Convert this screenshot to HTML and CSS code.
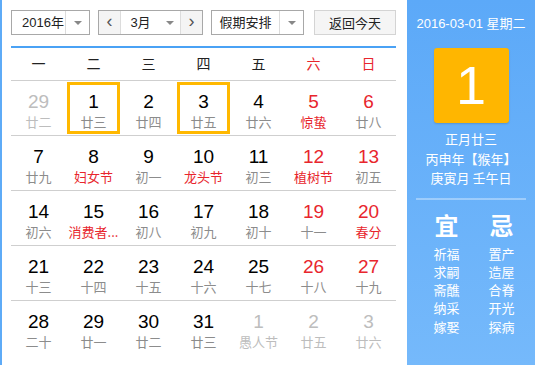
FILE: index.html
```html
<!DOCTYPE html>
<html lang="zh-CN">
<head>
    <meta charset="UTF-8">
    <title>万年历</title>
    <link rel="stylesheet" href="styles.css">
</head>
<body>
    <div class="cal">
        <div class="main">
            <div class="bar">
                <div class="sel year"><span class="val">2016年</span><span class="arr"><i></i></span></div>
                <div class="sel month">
                    <span class="nav">&lsaquo;</span>
                    <span class="val">3月</span><span class="arr"><i></i></span>
                    <span class="nav">&rsaquo;</span>
                </div>
                <div class="sel holiday"><span class="val">假期安排</span><span class="arr"><i></i></span></div>
                <button class="today">返回今天</button>
            </div>

            <div class="week">
                <span>一</span><span>二</span><span>三</span><span>四</span><span>五</span>
                <span class="red">六</span><span class="red">日</span>
            </div>

            <div class="days" id="days"></div>
        </div>

        <div class="side">
            <p class="date">2016-03-01 星期二</p>
            <div class="big">1</div>
            <div class="lunar">
                <p>正月廿三</p>
                <p>丙申年【猴年】</p>
                <p>庚寅月 壬午日</p>
            </div>
            <div class="yiji">
                <div class="col">
                    <h3>宜</h3>
                    <p>祈福</p><p>求嗣</p><p>斋醮</p><p>纳采</p><p>嫁娶</p>
                </div>
                <div class="col">
                    <h3>忌</h3>
                    <p>置产</p><p>造屋</p><p>合脊</p><p>开光</p><p>探病</p>
                </div>
            </div>
        </div>
    </div>

    <script>
        // [day, lunar, flags]  o = other month, f = festival, s = selected
        const days = [
            [29,'廿二','o'],[1,'廿三','s'],[2,'廿四',''],[3,'廿五','s'],[4,'廿六',''],[5,'惊蛰','f'],[6,'廿八',''],
            [7,'廿九',''],[8,'妇女节','f'],[9,'初一',''],[10,'龙头节','f'],[11,'初三',''],[12,'植树节','f'],[13,'初五',''],
            [14,'初六',''],[15,'消费者...','f'],[16,'初八',''],[17,'初九',''],[18,'初十',''],[19,'十一',''],[20,'春分','f'],
            [21,'十三',''],[22,'十四',''],[23,'十五',''],[24,'十六',''],[25,'十七',''],[26,'十八',''],[27,'十九',''],
            [28,'二十',''],[29,'廿一',''],[30,'廿二',''],[31,'廿三',''],[1,'愚人节','o'],[2,'廿五','o'],[3,'廿六','o']
        ]
        const box = document.getElementById('days')
        let html = ''
        for(let r = 0; r < 5; r++){
            html += '<div class="row">'
            for(let c = 0; c < 7; c++){
                const d = days[r*7+c]
                let cls = 'cell'
                if(c > 4) cls += ' weekend'
                if(d[2].includes('o')) cls += ' other'
                if(d[2].includes('s')) cls += ' on'
                const lc = d[2].includes('f') ? 'lu fest' : 'lu'
                html += `<div class="${cls}"><b>${d[0]}</b><span class="${lc}">${d[1]}</span></div>`
            }
            html += '</div>'
        }
        box.innerHTML = html
    </script>
</body>
</html>
```

FILE: styles.css
```css
*{
    box-sizing: border-box;
    margin: 0;
    padding: 0;
}

body{
    font-family: "Liberation Sans", "Noto Sans CJK SC", sans-serif;
    background: #fff;
}

.cal{
    display: flex;
    width: 535px;
    height: 365px;
    border-left: 2px solid #5eabf7;
}

.main{
    width: 405px;
    padding: 10px 11px 0 9px;
}

.bar{
    display: flex;
    height: 25px;
}

.sel{
    display: flex;
    height: 25px;
    border: 1px solid #a8a8a8;
    background: #fff;
    font-size: 13px;
    color: #222;
}

.sel .val{
    flex: 1;
    text-align: center;
    line-height: 23px;
}

.sel .arr{
    width: 24px;
    border-left: 1px solid #dcdcdc;
    display: flex;
    align-items: center;
    justify-content: center;
}

.sel .arr i{
    width: 0;
    height: 0;
    border-left: 4px solid transparent;
    border-right: 4px solid transparent;
    border-top: 4px solid #888;
}

.year{
    width: 79px;
    margin-right: 8px;
}

.year .val{
    text-align: left;
    padding-left: 10px;
}

.month{
    width: 105px;
    margin-right: 8px;
}

.month .nav{
    width: 22px;
    background: #f4f4f4;
    text-align: center;
    line-height: 21px;
    font-size: 18px;
    color: #555;
}

.month .nav:first-child{
    border-right: 1px solid #dcdcdc;
}

.month .nav:last-child{
    border-left: 1px solid #dcdcdc;
}

.month .arr{
    border-left: none;
    width: 20px;
}

.holiday{
    width: 93px;
    margin-right: 10px;
}

.today{
    width: 82px;
    height: 25px;
    border: 1px solid #d4d4d4;
    background: #f5f5f5;
    font-family: "Noto Sans CJK SC", sans-serif;
    font-size: 13px;
    color: #222;
}

.week{
    display: flex;
    margin-top: 11px;
    border-top: 2px solid #4aa2f5;
    border-bottom: 1px solid #cfcfcf;
    height: 35px;
}

.week span{
    flex: 1;
    text-align: center;
    line-height: 31px;
    font-family: "Noto Sans CJK SC", sans-serif;
    font-size: 14px;
    color: #222;
}

.week .red{
    color: #e8262d;
}

.row{
    display: flex;
    height: 55px;
    border-bottom: 1px solid #cfcfcf;
}

.row:last-child{
    border-bottom: none;
}

.cell{
    flex: 1;
    min-width: 0;
    margin: 1px;
    border: 3px solid transparent;
    display: flex;
    flex-direction: column;
    align-items: center;
    padding-top: 6px;
    white-space: nowrap;
}

.cell.on{
    border-color: #ffb800;
}

.cell b{
    font-weight: normal;
    font-size: 19px;
    line-height: 22px;
    color: #000;
}

.cell .lu{
    font-family: "Noto Sans CJK SC", sans-serif;
    font-size: 13px;
    line-height: 18px;
    color: #8c8c8c;
}

.cell.weekend b{
    color: #e8262d;
}

.cell .lu.fest{
    color: #e8262d;
}

.cell.other b,
.cell.other .lu{
    color: #bdbdbd;
}

.side{
    width: 128px;
    background: linear-gradient(#5ca9f8, #75b9fb);
    color: #fff;
    font-family: "Liberation Sans", "Noto Sans CJK SC", sans-serif;
    display: flex;
    flex-direction: column;
    align-items: center;
}

.date{
    margin-top: 15px;
    font-size: 13px;
    line-height: 18px;
}

.big{
    width: 75px;
    height: 75px;
    margin-top: 15px;
    background: #ffb600;
    border-radius: 3px;
    box-shadow: 0 1px 2px rgba(0, 0, 0, 0.15);
    text-align: center;
    font-size: 54px;
    line-height: 75px;
}

.lunar{
    margin-top: 6px;
    width: 110px;
    padding-bottom: 10px;
    border-bottom: 2px solid rgba(255, 255, 255, 0.35);
    text-align: center;
    font-family: "Noto Sans CJK SC", sans-serif;
    font-size: 13px;
    line-height: 19.5px;
}

.yiji{
    display: flex;
    gap: 29px;
    margin-top: 12px;
    margin-left: 6px;
    font-family: "Noto Sans CJK SC", sans-serif;
}

.col{
    text-align: center;
}

.col h3{
    font-size: 24px;
    font-weight: bold;
    line-height: 26px;
    margin-bottom: 7px;
}

.col p{
    font-size: 13px;
    line-height: 18.3px;
}
```
